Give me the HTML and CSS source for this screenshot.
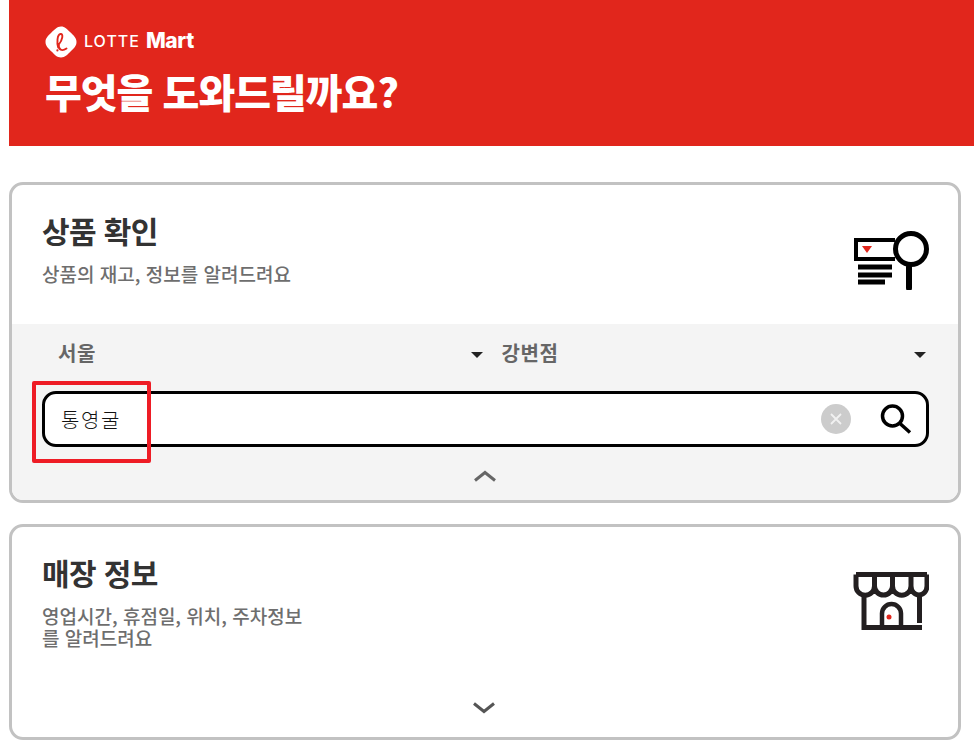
FILE: index.html
```html
<!DOCTYPE html>
<html lang="ko">
<head>
    <meta charset="UTF-8">
    <meta name="viewport" content="width=device-width, initial-scale=1.0">
    <title>LOTTE Mart</title>
    <link rel="stylesheet" href="styles.css">
</head>
<body>
    <header class="top">
        <div class="logo">
            <svg class="logo-mark" viewBox="0 0 32 32" width="32" height="32">
                <path d="M16 0.5C20 0.5 22 3 25 6C28 9 31.5 11.5 31.5 16C31.5 20 29 22 26 25C23 28 20 31.5 16 31.5C12 31.5 9.5 28.5 6.5 25.5C3.5 22.5 0.5 20 0.5 16C0.5 12 3 10 6 7C9 4 12 0.5 16 0.5Z" fill="#fff"/>
                <path d="M13.2 21.5C11.8 17 12 8.5 15.6 8C18.6 7.6 17.6 14 13.8 18.5C13.2 24 17 25.6 21.5 22.5" fill="none" stroke="#e1261c" stroke-width="1.9" stroke-linecap="round"/>
                <circle cx="12.4" cy="24.4" r="1.1" fill="#e1261c"/>
            </svg>
            <span class="logo-lotte">LOTTE</span>
            <span class="logo-mart">Mart</span>
        </div>
        <h1>무엇을 도와드릴까요?</h1>
    </header>

    <section class="card">
        <div class="card-head">
            <div>
                <h2>상품 확인</h2>
                <p>상품의 재고, 정보를 알려드려요</p>
            </div>
            <svg class="card-icon" viewBox="0 0 76 60" width="76" height="60">
                <path d="M42 10H3V29H42" fill="none" stroke="#000" stroke-width="4"/>
                <path d="M9 16H19L14 23Z" fill="#e1261c"/>
                <circle cx="58" cy="19" r="15.5" fill="none" stroke="#000" stroke-width="5"/>
                <path d="M56 37V58" stroke="#000" stroke-width="6" stroke-linecap="round"/>
                <path d="M5 37H39M5 45H39M5 52H32" stroke="#000" stroke-width="5"/>
            </svg>
        </div>
        <div class="finder">
            <div class="selects">
                <div class="select"><span>서울</span><i class="caret"></i></div>
                <div class="select"><span>강변점</span><i class="caret"></i></div>
            </div>
            <div class="search">
                <span class="search-text">통영굴</span>
                <span class="clear">
                    <svg viewBox="0 0 30 30" width="30" height="30"><path d="M10 10L20 20M20 10L10 20" stroke="#f1f1f1" stroke-width="1.8"/></svg>
                </span>
                <svg class="search-icon" viewBox="0 0 32 30" width="32" height="30">
                    <circle cx="12.5" cy="12" r="10" fill="none" stroke="#000" stroke-width="3.5"/>
                    <path d="M20 19.5L30 28.5" stroke="#000" stroke-width="3.5"/>
                </svg>
            </div>
            <svg class="chevron" viewBox="0 0 22 12" width="22" height="12"><path d="M1 10.5L11 2.5L21 10.5" fill="none" stroke="#666" stroke-width="3"/></svg>
        </div>
        <div class="mark"></div>
    </section>

    <section class="card card-store">
        <div class="card-head">
            <div>
                <h2>매장 정보</h2>
                <p>영업시간, 휴점일, 위치, 주차정보<br>를 알려드려요</p>
            </div>
            <svg class="card-icon" viewBox="0 0 76 60" width="76" height="60">
                <path d="M3 2.5H74M3 2.5V14A9.25 9.25 0 0 0 21.5 14A9 9 0 0 0 39.5 14A9.25 9.25 0 0 0 58 14A8 9 0 0 0 74 14V2.5M21.5 2.5V14M39.5 2.5V14M58 2.5V14" fill="none" stroke="#231f20" stroke-width="5"/>
                <path d="M11 23V55.5H69M66.5 23V51" fill="none" stroke="#231f20" stroke-width="5"/>
                <path d="M29 55V41.5A9.5 9.5 0 0 1 48 41.5V55" fill="none" stroke="#231f20" stroke-width="4.5"/>
                <circle cx="36" cy="45" r="2.5" fill="#e1261c"/>
            </svg>
        </div>
        <svg class="chevron chevron-store" viewBox="0 0 22 12" width="22" height="12"><path d="M1 1.5L11 9.5L21 1.5" fill="none" stroke="#555" stroke-width="3"/></svg>
    </section>
</body>
</html>
```

FILE: styles.css
```css
* {
    box-sizing: border-box;
}
body {
    margin: 0;
    padding: 0 13px 0 9px;
    background: #fff;
    font-family: "Noto Sans CJK KR", "Noto Sans", sans-serif;
    color: #333;
    position: relative;
}
h1, h2, p {
    margin: 0;
}

/* Header */
.top {
    height: 146px;
    margin-right: -13px;
    padding: 26px 0 0 36px;
    background: #e1261c;
    color: #fff;
}
.logo {
    display: flex;
    align-items: center;
    height: 32px;
}
.logo-mark {
    margin-right: 7px;
}
.logo-lotte {
    font-family: "Inter", sans-serif;
    font-size: 16px;
    font-weight: 500;
    letter-spacing: 1px;
    margin: 0 6px 3px 0;
}
.logo-mart {
    font-family: "Inter", sans-serif;
    font-size: 21px;
    font-weight: 800;
    letter-spacing: -0.4px;
    margin-bottom: 3px;
}
h1 {
    margin-top: 5px;
    font-size: 40px;
    font-weight: 900;
    line-height: 56px;
    letter-spacing: -1px;
}

/* Cards */
.card {
    position: relative;
    height: 321px;
    margin-top: 36px;
    border: 3px solid #c2c2c2;
    border-radius: 14px;
    overflow: hidden;
}
.card-store {
    height: 216px;
    margin-top: 21px;
}
.card-head {
    display: flex;
    justify-content: space-between;
    height: 139px;
    padding: 23px 29px 0 30px;
}
.card-head h2 {
    font-size: 30px;
    font-weight: 700;
    line-height: 44px;
    letter-spacing: -0.6px;
}
.card-head p {
    margin-top: 11px;
    font-size: 19px;
    font-weight: 500;
    line-height: 22px;
    letter-spacing: 0;
    color: #6e6e6e;
}
.card-icon {
    margin-top: 22px;
}

/* Store finder */
.finder {
    height: 176px;
    padding: 0 29px 0 30px;
    background: #f4f4f4;
    display: flex;
    flex-direction: column;
}
.selects {
    display: grid;
    grid-template-columns: 1fr 1fr;
    column-gap: 19px;
    height: 67px;
    padding: 0 3px 0 16px;
}
.select {
    display: flex;
    justify-content: space-between;
    align-items: center;
    height: 57px;
    font-size: 20px;
    font-weight: 700;
    letter-spacing: 0.6px;
    color: #666;
}
.caret {
    width: 0;
    height: 0;
    margin-top: 4px;
    border-left: 6.5px solid transparent;
    border-right: 6.5px solid transparent;
    border-top: 6px solid #222;
}
.search {
    display: flex;
    align-items: center;
    height: 56px;
    padding: 0 14px 0 16px;
    background: #fff;
    border: 3px solid #000;
    border-radius: 14px;
}
.search-text {
    flex: 1;
    font-size: 20px;
    font-weight: 300;
    letter-spacing: 1.6px;
    color: #111;
}
.clear {
    width: 30px;
    height: 30px;
    margin-right: 29px;
    border-radius: 50%;
    background: #ccc;
}
.clear svg {
    display: block;
}
.chevron {
    display: block;
    align-self: center;
    margin: 23px 2px 0 0;
}
.chevron-store {
    position: absolute;
    left: 461px;
    top: 175px;
    margin: 0;
}

/* Red annotation drawn over the search box */
.mark {
    position: absolute;
    left: 20px;
    top: 196px;
    width: 119px;
    height: 82px;
    border: 4px solid #ee1c25;
    border-radius: 2px;
}
```
